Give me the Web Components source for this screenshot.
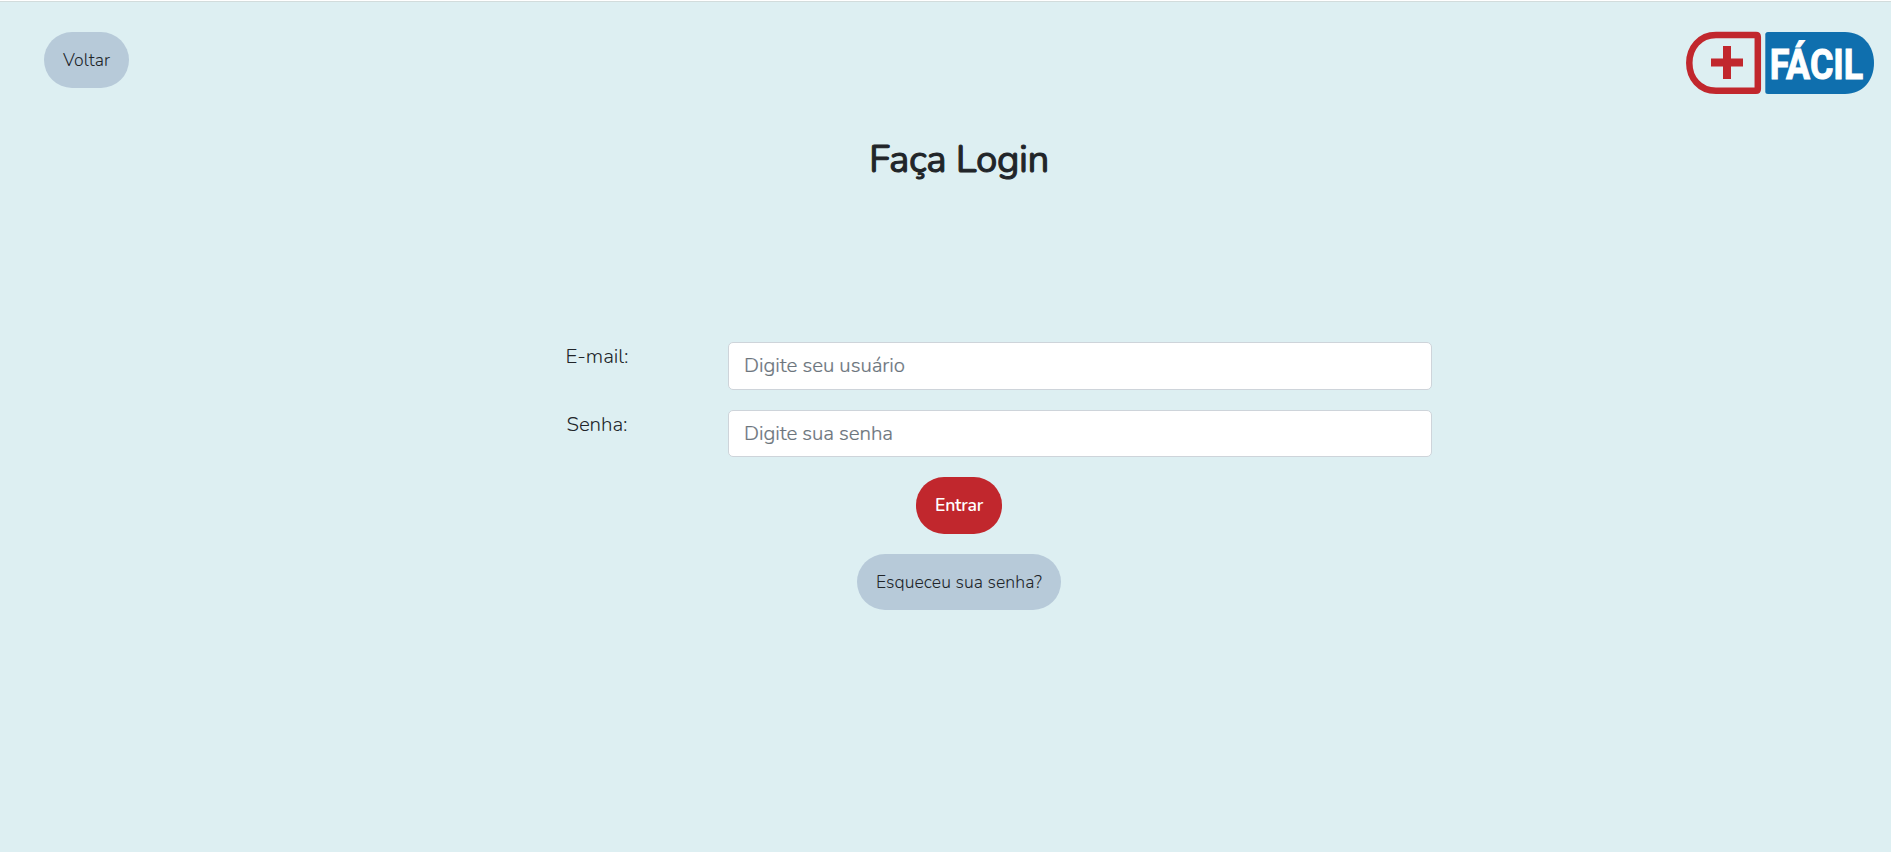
<!DOCTYPE html>
<html lang="pt-BR">
<head>
<meta charset="utf-8">
<title>Faça Login</title>
<style>
html,body{margin:0;height:100%}
body{background:#ddeff2;color:#212529;font-family:Nunito,Lato,sans-serif;font-weight:300;overflow:hidden}
</style>
</head>
<body>
<login-page></login-page>
<script>
const define = (name, html, setup) => customElements.define(name, class extends HTMLElement {
  connectedCallback() {
    if (this.shadowRoot) return;
    const t = document.createElement('template');
    t.innerHTML = html;
    this.attachShadow({mode: 'open'}).append(t.content.cloneNode(true));
    if (setup) setup(this, this.shadowRoot);
  }
});

// A line of text whose tracking is adjusted to an intended width.
define('fit-text', `<style>:host{display:inline-block;white-space:nowrap}span{display:inline-block}</style><span><slot></slot></span>`, (el, root) => {
  const span = root.querySelector('span');
  const want = +el.getAttribute('width');
  const n = el.textContent.length;
  span.style.letterSpacing = (want - span.getBoundingClientRect().width) / n + 'px';
});

define('pill-button', `<style>
:host{display:inline-flex;width:var(--w);height:var(--h,56px)}
button{all:unset;box-sizing:border-box;width:100%;height:100%;border-radius:28px;background:var(--bg,#b7cad9);color:var(--fg,#212529);font-size:17.6px;line-height:24px;font-weight:var(--weight,300);padding-bottom:var(--lift,0);display:flex;align-items:center;justify-content:center;cursor:pointer}
</style><button><slot></slot></button>`);

define('facil-logo', `<style>:host{display:block;width:188px;height:62px}svg{display:block;overflow:visible}</style>
<svg width="188" height="62" viewBox="0 0 188 62" role="img">
<path d="M30 3H70Q71.8 3 71.8 5V57Q71.8 58.8 70 58.8H30C13.500 58.800 3.300 46 3.300 31S13.500 3 30 3Z" fill="none" stroke="#c1272d" stroke-width="6.500"/>
<path d="M37 14h8v12.500h12v8H45V47H37V34.500H25v-8H37Z" fill="#c1272d"/>
<path d="M82 0H159C177 0 188 14 188 31S177 62 159 62H82Q79.300 62 79.300 59.500V2.500Q79.300 0 82 0Z" fill="#0f6fae"/>
<text x="83.700" y="46.500" textLength="93.500" lengthAdjust="spacingAndGlyphs" font-family="Roboto,sans-serif" font-weight="700" font-size="42" fill="#fff" stroke="#fff" stroke-width="1">FÁCIL</text>
</svg>`);

define('form-row', `<style>
:host{display:grid;grid-template-columns:162px 704px;column-gap:50px;height:var(--h)}
label{font-size:20.5px;line-height:28px;text-align:center}
.box{box-sizing:border-box;border:1px solid #ced4da;border-radius:5px;background:#fff;height:100%;padding:0 15px 2px;font-size:20.5px;color:#6c757d;-webkit-text-stroke:.2px currentColor;display:flex;align-items:center}
</style><label><slot name="label"></slot></label><div class="box"><slot></slot></div>`);

define('login-page', `<style>
:host{display:flex;flex-direction:column;height:100vh;box-sizing:border-box;border-top:1px solid #fff}
header{display:flex;justify-content:space-between;align-items:flex-start;border-top:1px solid #d2dcdc;padding:30px 17px 0 44px;height:62px}
h1{margin:42px 0 0;padding-left:27px;text-align:center;font-size:38.4px;line-height:48px;font-weight:400;-webkit-text-stroke:1px currentColor}
main{display:flex;flex-direction:column;align-items:center}
form{margin-top:158px;padding-left:57px;display:flex;flex-direction:column;gap:20px}
.actions{display:flex;flex-direction:column;align-items:center;gap:20px;margin-top:20px;padding-left:27px}
.enter{--bg:#c1272d;--fg:#fff;--weight:600;--h:57px;--w:86px;--lift:1px}
</style>
<header>
<pill-button style="--w:85px"><fit-text width="47">Voltar</fit-text></pill-button>
<facil-logo></facil-logo>
</header>
<main>
<h1><fit-text width="180">Faça Login</fit-text></h1>
<form>
<form-row style="--h:48px"><fit-text slot="label" width="63">E-mail:</fit-text><fit-text width="161">Digite seu usuário</fit-text></form-row>
<form-row style="--h:47px"><fit-text slot="label" width="61">Senha:</fit-text><fit-text width="149">Digite sua senha</fit-text></form-row>
</form>
<div class="actions">
<pill-button class="enter"><fit-text width="48">Entrar</fit-text></pill-button>
<pill-button style="--w:204px"><fit-text width="166">Esqueceu sua senha?</fit-text></pill-button>
</div>
</main>`);
</script>
</body>
</html>
